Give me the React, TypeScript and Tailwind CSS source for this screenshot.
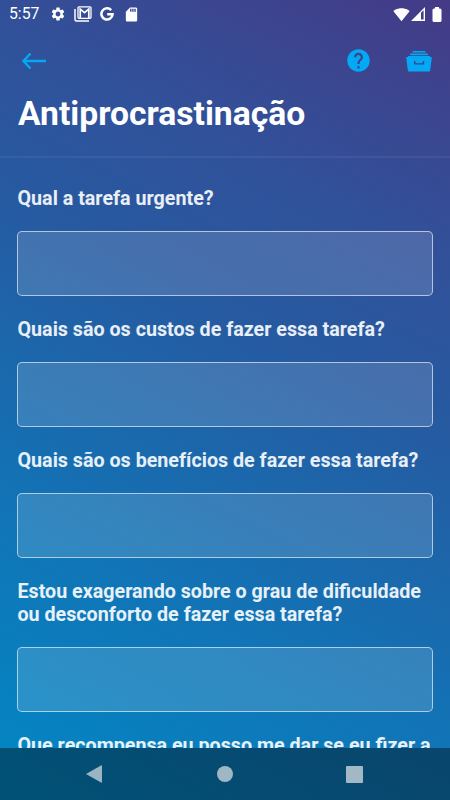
import { MdSettings, MdSdCard, MdHelp, MdSignalWifi4Bar } from "react-icons/md";

const questions = [
  "Qual a tarefa urgente?",
  "Quais são os custos de fazer essa tarefa?",
  "Quais são os benefícios de fazer essa tarefa?",
  "Estou exagerando sobre o grau de dificuldade ou desconforto de fazer essa tarefa?",
];

export default function App() {
  return (
    <main className="flex h-[800px] w-[450px] flex-col overflow-hidden bg-[linear-gradient(208deg,#453a86_0%,#31519a_25%,#2759a0_40%,#1273b5_70%,#0288c5_100%)] font-['Roboto',sans-serif] text-white">

      {/* STATUS BAR */}
      <div className="flex h-7 shrink-0 items-center pl-[9px] pr-[8px]">
        <span className="w-[41px] text-[15.750px] leading-7">5:57</span>
        <MdSettings className="size-4" />
        <svg className="ml-2 h-[16px] w-[18px]" viewBox="0 0 18 16" fill="none">
          <path d="M1 3v10.500q0 1.500 1.500 1.500H15" stroke="white" strokeWidth="1.500" />
          <rect x="4" y=".8" width="13" height="11.500" rx="1" stroke="white" strokeWidth="1.300" />
          <path d="M6.200 12V3l4.300 3.600L14.800 3v9" stroke="white" strokeWidth="1.700" />
        </svg>
        <svg className="ml-2 size-[14px]" viewBox="0 0 14 14" fill="none">
          <path d="M11.200 3.200A5.600 5.600 0 1 0 12.600 7.200H7.200" stroke="white" strokeWidth="2.500" />
        </svg>
        <MdSdCard className="ml-[9px] size-[17px]" />
        <div className="ml-auto flex items-center">
          <MdSignalWifi4Bar className="size-[17px]" />
          <svg className="ml-px h-[14px] w-[14px]" viewBox="0 0 14 14">
            <path fillRule="evenodd" d="M0 14 14 0v14zM10 5.800V12.600h2.600V3.200z" fill="white" />
          </svg>
          <svg className="ml-[7px] h-[15px] w-[10px]" viewBox="0 0 10 15">
            <path d="M3 0h4v1.500h1q1.500 0 1.500 1.500v10.500q0 1.500-1.500 1.500H2q-1.500 0-1.500-1.500V3q0-1.500 1.500-1.500h1z" fill="white" />
          </svg>
        </div>
      </div>

      {/* HEADER */}
      <header className="h-[130px] shrink-0 border-b-2 border-white/6 px-[18px]">
        <div className="flex h-[65px] items-center text-[#03a9f4]">
          <button aria-label="Voltar" className="ml-[3px]">
            <svg className="h-[18px] w-[26px]" viewBox="0 0 26 18" fill="none" stroke="currentColor" strokeWidth="2.400">
              <path d="M25 9H2.500M9.500 1.500 2.500 9l7 7.500" />
            </svg>
          </button>
          <button aria-label="Ajuda" className="ml-auto">
            <MdHelp className="size-[27px]" />
          </button>
          <button aria-label="Arquivo" className="ml-[34.500px] pt-[2px]">
            <svg className="h-[21px] w-[26px]" viewBox="0 0 26 22" preserveAspectRatio="none" fill="currentColor">
              <rect x="6.500" y="0" width="13" height="1.700" rx=".5" />
              <rect x="4" y="2.500" width="18" height="1.900" rx=".5" />
              <path fillRule="evenodd" d="M1 6.300h1V5.200h22v1.100h1q1 0 .8 1l-1.700 13q-.2 1.300-1.400 1.300H3.300q-1.200 0-1.400-1.300L.2 7.300q-.2-1 .8-1zM8 10.500v2.500q0 1.200 1.200 1.200h7.800q1.200 0 1.200-1.200v-2.500h-1.400v2.300H9.400v-2.300z" />
            </svg>
          </button>
        </div>
        <h1 className="mt-px text-[33.650px] font-bold leading-10">Antiprocrastinação</h1>
      </header>

      {/* QUESTIONS */}
      <section className="min-h-0 flex-1 overflow-hidden px-[17px] pt-[29px]">
        {questions.map((question) => (
          <label key={question} className="mb-[22px] block text-[19.700px] font-bold leading-[23px] text-white/90">
            <span className="block pl-[0.500px]">{question}</span>
            <textarea className="mt-[21px] block h-[65px] w-full resize-none rounded-[5px] border border-white/60 bg-white/14" />
          </label>
        ))}
        <p className="whitespace-nowrap pl-[0.500px] text-[19.700px] font-bold leading-[23px] text-white/90">
          Que recompensa eu posso me dar se eu fizer a
        </p>
      </section>

      {/* NAVIGATION BAR */}
      <nav className="flex h-[52px] shrink-0 items-center bg-black/40 text-[#9bb4c3]">
        <svg className="ml-[86px] h-[18px] w-4" viewBox="0 0 16 18" fill="currentColor">
          <path d="M0 9 15 .4q1-.5 1 .5v16.200q0 1-1 .5z" />
        </svg>
        <div className="ml-[115px] size-4 rounded-full bg-[#9fb6c4]" />
        <div className="ml-[113px] size-[17px] rounded-[1px] bg-[#a3b8c6]" />
      </nav>

    </main>
  );
}
